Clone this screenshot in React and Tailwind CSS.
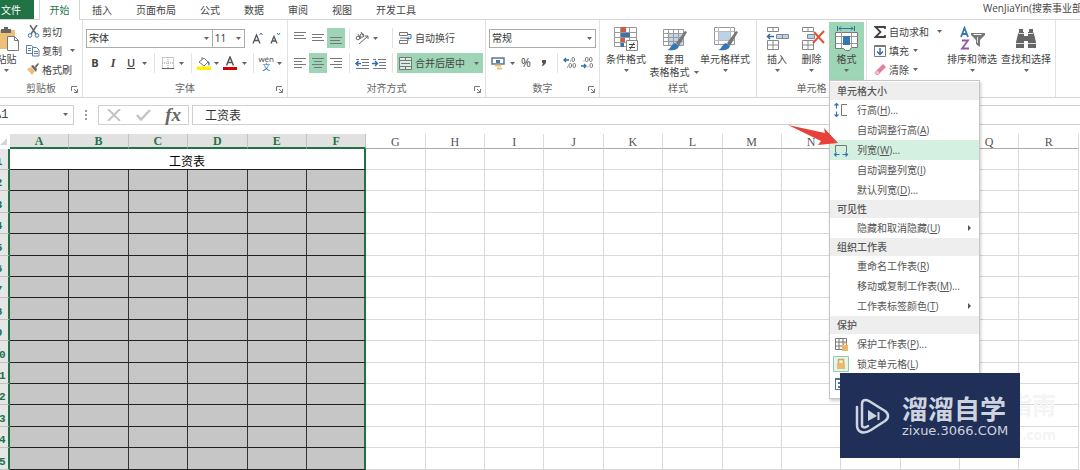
import React from 'react';

const tabs = ['插入', '页面布局', '公式', '数据', '审阅', '视图', '开发工具'];
const columns = 'ABCDEFGHIJKLMNOPQR'.split('');
const selected = columns.slice(0, 6);
const rowHeights = ['h-[21px]', 'h-[21px]', 'h-[22px]', 'h-[21px]', 'h-[22px]'];

function Caret({ className = '' }) {
  return (
    <svg viewBox="0 0 5 3" className={'h-[3px] w-[5px] shrink-0 ' + className} fill="#666" aria-hidden="true">
      <path d="M0 0h5L2.5 3z" />
    </svg>
  );
}

function Drop({ label }) {
  return (
    <button aria-label={label} className="flex h-full w-2.5 items-center justify-center">
      <Caret />
    </button>
  );
}

function Sep() {
  return <span className="mx-1 h-5 w-px shrink-0 bg-[#e3e3e3]" />;
}

function Tool({ label, active, narrow, children }) {
  return (
    <button
      aria-label={label}
      className={
        'flex h-full shrink-0 items-center justify-center text-[#444] ' +
        (narrow ? 'w-4 ' : 'w-[18px] ') +
        (active ? 'bg-[#9fd5b7]' : '')
      }
    >
      {children}
    </button>
  );
}

function Group({ label, width, launcher, children }) {
  return (
    <section className={'flex shrink-0 flex-col border-r border-[#e1e1e1] ' + width}>
      <div className="flex h-[60px]">{children}</div>
      <div className="relative h-[17px] text-center leading-[17px] text-[#666]">
        {label}
        {launcher && (
          <button aria-label={label + '设置'} className="absolute right-1 top-[6px]">
            <svg viewBox="0 0 7 7" className="h-[7px] w-[7px]" fill="none" stroke="#777">
              <path d="M.5 5V.5H6M3 3l3 3M6.5 3v3.5H3" />
            </svg>
          </button>
        )}
      </div>
    </section>
  );
}

function TwoRows({ children }) {
  return <div className="flex w-full flex-col gap-[5px] px-[3px] pt-2">{children}</div>;
}

function Row({ children }) {
  return <div className="flex h-5 items-center">{children}</div>;
}

function Big({ label, width, active, icon, second }) {
  return (
    <button
      className={
        'mt-[2px] flex h-[58px] shrink-0 flex-col items-center whitespace-nowrap pt-1 ' + width + (active ? ' bg-[#9fd5b7]' : '')
      }
    >
      {icon}
      <span className="leading-[14px]">{label}</span>
      {second ? (
        <span className="flex items-center gap-1 leading-3">
          {second}
          <Caret />
        </span>
      ) : (
        <Caret className="mt-[3px]" />
      )}
    </button>
  );
}

function Small({ label, icon, drop, wide }) {
  return (
    <button className="flex h-[19px] items-center whitespace-nowrap">
      <span className="mr-[2px] flex w-[14px] justify-center">{icon}</span>
      {label}
      {drop && <Caret className={wide ? 'ml-2' : 'ml-1'} />}
    </button>
  );
}

function Lines({ widths, y = 2, align = 'left' }) {
  return (
    <svg viewBox="0 0 12 14" className="h-[14px] w-3" stroke="#777" aria-hidden="true">
      {widths.map((w, i) => {
        const x = align === 'left' ? 0 : align === 'right' ? 12 - w : (12 - w) / 2;
        return <path key={i} d={`M${x} ${y + i * 3 + 0.5}h${w}`} />;
      })}
    </svg>
  );
}

function IndentIcon({ flip }) {
  return (
    <svg viewBox="0 0 14 11" className="h-[11px] w-[14px]" fill="none" aria-hidden="true">
      <path stroke="#777" d="M6 1.5h8M7 4.5h7M7 7.5h7M1 10.5h13M1 1.5h3" />
      <path stroke="#2f6fad" strokeWidth="1.5" d={flip ? 'M0 5.5h5M3 3l2.5 2.5L3 8' : 'M6 5.5H1M3.500 3L1 5.500 3.500 8'} />
    </svg>
  );
}

function DecimalIcon({ more }) {
  return (
    <svg viewBox="0 0 14 12" className="h-3 w-[14px]" aria-hidden="true">
      <g fill="none" stroke="#777">
        {more ? (
          <>
            <rect x="9" y=".5" width="2.500" height="4" rx="1.200" />
            <rect x="6" y="6.500" width="2.500" height="4" rx="1.200" />
            <rect x="10" y="6.500" width="2.500" height="4" rx="1.200" />
            <path d="M7 4h1M4 10h1" />
          </>
        ) : (
          <>
            <rect x="5.500" y=".5" width="2.500" height="4" rx="1.200" />
            <rect x="9.500" y=".5" width="2.500" height="4" rx="1.200" />
            <rect x="10" y="6.500" width="2.500" height="4" rx="1.200" />
            <path d="M3.500 4h1M7.500 10h1" />
          </>
        )}
      </g>
      <path fill="none" stroke="#2f6fad" strokeWidth="1.300" d={more ? 'M6 3H1M3 1L1 3l2 2' : 'M1 9h5M4 7l2 2-2 2'} />
    </svg>
  );
}

function PasteIcon() {
  return (
    <svg viewBox="0 0 24 26" className="h-[26px] w-6" aria-hidden="true">
      <path fill="#eec078" d="M0 4h20v19H0z" />
      <path fill="#666" d="M6 3h3V1h4v2h3v4H6z" />
      <path fill="#fff" stroke="#777" d="M12.500 10.500h7l4 4v10h-11zM19.500 10.500v4h4" />
    </svg>
  );
}

function Brush() {
  return (
    <>
      <path d="M27 6l-2-1-9 12 3 3z" fill="#777" />
      <path d="M15 17l4 3c-1 4-6 5-12 4 4-1 4-6 8-7z" fill="#3576b5" />
    </>
  );
}

function ConditionalIcon() {
  return (
    <svg viewBox="0 0 28 26" className="h-[26px] w-7" aria-hidden="true">
      <path fill="#fff" stroke="#999" d="M2.500 1.500h22v19h-22zM2 6.500h22M2 11.500h22M2 16.500h22M8.500 1v20M17.500 1v20" />
      <path fill="#d0583f" d="M9 1h5v5H9zM9 12h4v4H9z" />
      <path fill="#3d72ab" d="M9 7h9v4H9zM9 17h3v4H9z" />
      <path fill="#fff" stroke="#888" d="M14.500 14.500h11v10h-11z" />
      <path stroke="#444" d="M17 18.500h6M17 21.500h6M22 16.500l-4 7" />
    </svg>
  );
}

function TableFormatIcon() {
  return (
    <svg viewBox="0 0 28 26" className="h-[26px] w-7" aria-hidden="true">
      <path fill="#fff" stroke="#999" d="M3.500 3.500h20v16h-20z" />
      <path fill="#c3d6e8" d="M9 8h14v11H9z" />
      <path fill="none" stroke="#999" d="M3 7.500h20M3 11.500h20M3 15.500h20M8.500 3v16M13.500 3v16M18.500 3v16" />
      <Brush />
    </svg>
  );
}

function CellStyleIcon() {
  return (
    <svg viewBox="0 0 28 26" className="h-[26px] w-7" aria-hidden="true">
      <path fill="#fff" stroke="#999" d="M3.500 1.500h20v17h-20z" />
      <path fill="none" stroke="#bbb" d="M3 5.500h20M3 14.500h20M7.500 1v17M19.500 1v17" />
      <path fill="#bcd2e6" d="M8 6h11v8H8z" />
      <Brush />
    </svg>
  );
}

function InsertIcon({ remove }) {
  return (
    <svg viewBox="0 0 26 26" className="h-[26px] w-[26px]" aria-hidden="true">
      <path fill="#fff" stroke="#888" d="M3.500 1.500h11v4h-11zM9 1.500v4M3.500 14.500h11v9h-11zM3.500 19h11M9 14.500v9" />
      <path fill="#b9d2e9" stroke="#888" d={remove ? 'M8.500 8.500h7v4h-7z' : 'M12.500 8.500h12v4h-12zM18.500 8.500v4'} />
      {remove ? (
        <path stroke="#dd5535" strokeWidth="2" d="M15 6l10 11M25 5L14 17" />
      ) : (
        <path fill="none" stroke="#2f6fad" strokeWidth="1.500" d="M10 10.500H4M6 8l-2.500 2.500L6 13" />
      )}
    </svg>
  );
}

function FormatIcon() {
  return (
    <svg viewBox="0 0 26 26" className="h-[26px] w-[26px]" aria-hidden="true">
      <path fill="none" stroke="#2f6fad" d="M3.500 0v5M20.500 0v5M5 2.500h14M7 .5l-2 2 2 2M17 .5l2 2-2 2" />
      <path fill="#fff" stroke="#777" d="M1.500 6.500h22v15h-6l-2 3h-4l-2-2h-8z" />
      <path fill="none" stroke="#999" d="M1.500 10.500h22M1.500 17.500h22M7.500 6v16M17.500 6v15" />
      <path fill="#3576b5" d="M9 10h7v9H9z" />
    </svg>
  );
}

function SortIcon() {
  return (
    <svg viewBox="0 0 26 26" className="h-[26px] w-[26px]" fill="none" aria-hidden="true">
      <path stroke="#3477b5" strokeWidth="1.800" d="M2 11L5.500 2 9 11M3.500 8h4" />
      <path stroke="#9055a8" strokeWidth="1.800" d="M3 14.500h6L3 22.500h7" />
      <path fill="#777" d="M12 7h14v2l-5 5v7l-4-3v-4l-5-5z" />
      <path stroke="#fff" d="M14.500 8.500h8" />
      <path stroke="#ddd" d="M18.500 11v6" />
    </svg>
  );
}

function BinocularsIcon() {
  return (
    <svg viewBox="0 0 24 26" className="h-[26px] w-6" fill="#666" aria-hidden="true">
      <path d="M5 3h4v3h1v4h4V6h1V3h4v3l1 2 2 8v6h-8v-7h-4v7H2v-6l2-8 1-2z" />
      <path stroke="#ddd" d="M2 17.500h8M14 17.500h8M5 7.500h5M14 7.500h5" />
    </svg>
  );
}

const menu = [
  { heading: '单元格大小' },
  { text: '行高', k: 'H', dots: true, icon: 'height' },
  { text: '自动调整行高', k: 'A' },
  { text: '列宽', k: 'W', dots: true, icon: 'width', active: true },
  { text: '自动调整列宽', k: 'I' },
  { text: '默认列宽', k: 'D', dots: true },
  { heading: '可见性' },
  { text: '隐藏和取消隐藏', k: 'U', sub: true },
  { heading: '组织工作表' },
  { text: '重命名工作表', k: 'R' },
  { text: '移动或复制工作表', k: 'M', dots: true },
  { text: '工作表标签颜色', k: 'T', sub: true },
  { heading: '保护' },
  { text: '保护工作表', k: 'P', dots: true, icon: 'protect' },
  { text: '锁定单元格', k: 'L', icon: 'lock' },
];

function MenuIcon({ name }) {
  return (
    <svg viewBox="0 0 16 18" className="h-[18px] w-4" fill="none" aria-hidden="true">
      {name === 'height' && (
        <>
          <path stroke="#3477b5" strokeWidth="1.200" d="M3.500 2.500v5M1.500 4.500l2-2 2 2M3.500 10.500v5M1.500 13.500l2 2 2-2" />
          <path stroke="#777" d="M14 3.500H8.500v11H14" />
        </>
      )}
      {name === 'width' && (
        <>
          <path stroke="#777" d="M2.500 11V4.500h11V11" />
          <path stroke="#3477b5" strokeWidth="1.200" d="M1.500 13.500h5M3.500 11.500l-2 2 2 2M14.500 13.500h-5M12.500 11.500l2 2-2 2" />
        </>
      )}
      {name === 'protect' && (
        <>
          <path stroke="#777" d="M2.500 3.500h11v11h-11zM2.500 7h11M2.500 11h11M6 3.500v11M10 3.500v11" />
          <path fill="#eab76b" d="M9 10h6v6H9z" />
          <path stroke="#d9a050" d="M10.500 10V8h3v2" />
        </>
      )}
      {name === 'lock' && (
        <>
          <path fill="#e6f4ec" stroke="#8fcbab" d="M.5 1.500h15v15H.5z" />
          <path fill="#edb96a" d="M4 8h8v6H4z" />
          <path stroke="#dba352" strokeWidth="1.500" d="M5.500 8V4.500h5V8" />
        </>
      )}
      {name === 'cells' && (
        <>
          <path fill="#fff" stroke="#51709a" d="M2.500 3.500h12v11h-12z" />
          <path stroke="#51709a" strokeWidth="2" d="M2 4h13M5 8h3M5 12h3" />
        </>
      )}
    </svg>
  );
}

function FormatMenu() {
  return (
    <div role="menu" aria-label="格式" className="absolute left-0 top-[60px] z-10 w-[151px] border border-[#c6c6c6] bg-white shadow-[1px_2px_3px_rgba(0,0,0,0.2)]">
      <div className="pb-1 pt-px">
        {menu.map((m) =>
          m.heading ? (
            <div key={m.heading} className="h-[18px] bg-[#eeeeee] px-[7px] font-medium leading-[18px] text-[#555]">
              {m.heading}
            </div>
          ) : (
            <button
              role="menuitem"
              key={m.text}
              className={'flex h-5 w-full items-center whitespace-nowrap pl-[3px] pr-2 text-[#555] ' + (m.active ? 'bg-[#d3f0e0]' : '')}
            >
              <span className="mr-2 flex w-4 shrink-0">{m.icon && <MenuIcon name={m.icon} />}</span>
              <span>
                {m.text}(<u>{m.k}</u>){m.dots && '...'}
              </span>
              {m.sub && (
                <svg viewBox="0 0 3 6" className="ml-auto h-[6px] w-[3px]" fill="#555" aria-hidden="true">
                  <path d="M0 0l3 3-3 3z" />
                </svg>
              )}
            </button>
          ),
        )}
        <button role="menuitem" aria-label="单元格格式" className="flex h-5 w-full items-center pl-[3px]">
          <MenuIcon name="cells" />
        </button>
      </div>
    </div>
  );
}

function Ribbon() {
  return (
    <div className="flex h-[78px] border-b border-[#d5d5d5] text-[#444]">
      <Group label="剪贴板" width="w-[83px]" launcher>
        <div className="-ml-1 w-[30px]">
          <Big label="粘贴" width="-ml-1 w-[29px]" icon={<PasteIcon />} />
        </div>
        <div className="flex flex-col pt-[2px]">
          <Small
            label="剪切"
            icon={
              <svg viewBox="0 0 13 13" className="h-[13px] w-[13px]" fill="none">
                <path stroke="#666" strokeWidth="1.500" d="M3 0l6 9M10 0L4 9" />
                <circle cx="3" cy="10.500" r="1.800" stroke="#3477b5" />
                <circle cx="10" cy="10.500" r="1.800" stroke="#3477b5" />
              </svg>
            }
          />
          <Small
            label="复制"
            drop
            wide
            icon={
              <svg viewBox="0 0 14 13" className="h-[13px] w-[14px]" fill="#fff" stroke="#5a7fa8">
                <path d="M.5 1.500h5l2 2v6h-7zM2 4.500h3M2 6.500h3" />
                <path d="M6.500 3.500h4l2.500 2.500v6H6.500zM8 7.500h4M8 9.500h4" />
              </svg>
            }
          />
          <Small
            label="格式刷"
            icon={
              <svg viewBox="0 0 14 13" className="h-[13px] w-[14px]">
                <path fill="#eebd78" d="M1 6l4-2 4 4-3 4z" />
                <path fill="#666" d="M5 3l2-1 4 4-1 3zM9 3l3-3 1 1-3 4z" />
              </svg>
            }
          />
        </div>
      </Group>

      <Group label="字体" width="w-[205px]" launcher>
        <TwoRows>
          <Row>
            <Combo label="字体名称" value="宋体" width="w-[130px]" />
            <Combo label="字号" value="11" width="-ml-px w-[34px]" />
            <button aria-label="增大字号" className="ml-1 flex w-[18px] items-center justify-center">
              <svg viewBox="0 0 12 12" className="h-3 w-3" fill="none" stroke="#555">
                <path strokeWidth="1.300" d="M1 11.500L4.500 3 8 11.500M2 8.500h5" />
                <path stroke="#3477b5" d="M7.500 3L9 1l1.500 2" />
              </svg>
            </button>
            <button aria-label="减小字号" className="flex w-[18px] items-center justify-center">
              <svg viewBox="0 0 12 12" className="h-3 w-3" fill="none" stroke="#555">
                <path strokeWidth="1.300" d="M2 11.500L5 4.500l3 7M3 9h4" />
                <path stroke="#3477b5" d="M8 1l1.500 2L11 1" />
              </svg>
            </button>
          </Row>
          <Row>
            <Tool label="加粗"><b className="text-[11px]">B</b></Tool>
            <Tool label="倾斜"><i className="font-['Liberation_Serif',serif] text-[12px] font-bold">I</i></Tool>
            <Tool label="下划线"><u className="text-[11px] font-semibold">U</u></Tool>
            <Drop label="下划线选项" />
            <Sep />
            <Tool label="边框">
              <svg viewBox="0 0 12 12" className="h-3 w-3" fill="none" stroke="#999">
                <path strokeDasharray="1 1" d="M.5.5h11v11M.5.5v11M6 0v12M0 6h12" />
                <path stroke="#666" d="M0 11.500h12" />
              </svg>
            </Tool>
            <Drop label="边框选项" />
            <Sep />
            <Tool label="填充颜色" narrow>
              <svg viewBox="0 0 14 14" className="h-[14px] w-[14px]" fill="none">
                <path stroke="#777" d="M2 6l5-4 4 4-4 4zM5 4V1" />
                <path fill="#3477b5" d="M11 5c2 1 2 3 1 5-1-1-1-3-1-5z" />
                <path fill="#fff100" d="M0 10.500h14V14H0z" />
              </svg>
            </Tool>
            <Drop label="填充颜色选项" />
            <Tool label="字体颜色">
              <svg viewBox="0 0 14 14" className="h-[14px] w-[14px]" fill="none">
                <path stroke="#555" strokeWidth="1.500" d="M3.500 9.500L7 1l3.500 8.500M4.500 6.500h5" />
                <path fill="#d40000" d="M0 11h14v3H0z" />
              </svg>
            </Tool>
            <Drop label="字体颜色选项" />
            <Sep />
            <Tool label="拼音" narrow>
              <span className="flex flex-col items-center text-[8px] leading-[8px]">
                <span>wén</span>
                <span className="text-[#2f6fad]">文</span>
              </span>
            </Tool>
            <Drop label="拼音选项" />
          </Row>
        </TwoRows>
      </Group>

      <Group label="对齐方式" width="w-[198px]" launcher>
        <TwoRows>
          <Row>
            <Tool label="顶端对齐"><Lines widths={[12, 10, 12]} y={1} /></Tool>
            <Tool label="垂直居中"><Lines widths={[12, 10, 12]} y={3} /></Tool>
            <Tool label="底端对齐" active><Lines widths={[12, 10, 12]} y={6} /></Tool>
            <Sep />
            <Tool label="方向" narrow>
              <svg viewBox="0 0 14 14" className="h-[14px] w-[14px]" fill="none" stroke="#666">
                <circle cx="3" cy="7" r="1.800" />
                <circle cx="7" cy="4.500" r="1.800" />
                <path d="M3 3l3 5M6 1l3 5M4 13l9-8M13 8V5h-3" />
              </svg>
            </Tool>
            <button aria-label="方向选项" className="flex h-full w-[18px] items-center pl-[3px]"><Caret /></button>
            <Sep />
            <button className="flex h-full items-center gap-[3px] whitespace-nowrap pl-[2px]">
              <svg viewBox="0 0 13 14" className="h-[14px] w-[13px]" fill="none" stroke="#777">
                <path d="M.5 1.500h8v3h-8zM.5 9.500h8v3h-8zM1 7h7" />
                <path stroke="#2f6fad" d="M9 3.500h3v4H8M10 5.500l-2 2 2 2" />
              </svg>
              自动换行
            </button>
          </Row>
          <Row>
            <Tool label="左对齐"><Lines widths={[12, 8, 12, 8]} /></Tool>
            <Tool label="居中" active><Lines widths={[12, 8, 12, 8]} align="center" /></Tool>
            <Tool label="右对齐"><Lines widths={[12, 8, 12, 8]} align="right" /></Tool>
            <Sep />
            <Tool label="减少缩进量" narrow><IndentIcon /></Tool>
            <Tool label="增加缩进量"><IndentIcon flip /></Tool>
            <Sep />
            <button className="flex h-full items-center gap-[3px] whitespace-nowrap bg-[#9fd5b7] pl-[2px] pr-1">
              <svg viewBox="0 0 13 13" className="h-[13px] w-[13px]" fill="#d9eee2" stroke="#777">
                <path d="M.5.5h12v12H.5zM.5 3.500h12M.5 9.500h12M6.500.5v3M6.500 9.500v3" />
                <path stroke="#777" d="M2 6.500h9" />
              </svg>
              合并后居中
              <Caret className="ml-[6px]" />
            </button>
          </Row>
        </TwoRows>
      </Group>

      <Group label="数字" width="w-[114px]" launcher>
        <TwoRows>
          <Row>
            <Combo label="数字格式" value="常规" width="w-[107px]" />
          </Row>
          <Row>
            <Tool label="会计格式">
              <svg viewBox="0 0 14 13" className="h-[13px] w-[14px]" fill="none">
                <path stroke="#55779f" strokeWidth="1.500" d="M1 1h12v6H1z" />
                <path fill="#55779f" d="M5 3h4v3H5z" />
                <path stroke="#e8c070" strokeWidth="2" d="M4 8.500h6M6 11.500h5" />
              </svg>
            </Tool>
            <Drop label="会计格式选项" />
            <Tool label="百分比"><span className="text-[12px]">%</span></Tool>
            <Tool label="千位分隔">
              <svg viewBox="0 0 4 6" className="h-[6px] w-1" fill="#555"><path d="M0 0h4v3L1 6H0l1-3H0z" /></svg>
            </Tool>
            <Sep />
            <Tool label="增加小数位" narrow><DecimalIcon more /></Tool>
            <Tool label="减少小数位"><DecimalIcon /></Tool>
          </Row>
        </TwoRows>
      </Group>

      <Group label="样式" width="w-[157px]">
        <div className="flex pl-[3px]">
          <Big label="条件格式" width="w-[46px]" icon={<ConditionalIcon />} />
          <Big label="套用" second="表格格式" width="w-[50px]" icon={<TableFormatIcon />} />
          <Big label="单元格样式" width="w-[52px]" icon={<CellStyleIcon />} />
        </div>
      </Group>

      <Group label="单元格" width="w-[110px]">
        <div className="flex pl-[3px]">
          <Big label="插入" width="w-[34px]" icon={<InsertIcon />} />
          <Big label="删除" width="w-[35px]" icon={<InsertIcon remove />} />
          <div className="relative">
            <Big label="格式" width="w-[35px]" active icon={<FormatIcon />} />
            <FormatMenu />
            <svg viewBox="0 0 52 24" className="absolute -left-[41px] top-[104px] z-20 h-6 w-[52px]" fill="#e8413a" aria-hidden="true">
              <path d="M0 1l37 8-1-5 14 15-20 2 3-4z" />
            </svg>
          </div>
        </div>
      </Group>

      <Group width="w-[189px]">
        <div className="flex w-[78px] flex-col pl-[6px] pt-[2px]">
          <Small
            label="自动求和"
            drop
            wide
            icon={
              <svg viewBox="0 0 12 12" className="h-3 w-3" fill="none" stroke="#444" strokeWidth="1.800">
                <path d="M11 3V1H1.500l5 5-5 5H11V9" />
              </svg>
            }
          />
          <Small
            label="填充"
            drop
            icon={
              <svg viewBox="0 0 12 12" className="h-3 w-3" fill="none">
                <path stroke="#777" d="M.5.5h11v11H.5zM0 1.500h12" />
                <path stroke="#2f6fad" strokeWidth="1.500" d="M6 3v6M3 6.500l3 3 3-3" />
              </svg>
            }
          />
          <Small
            label="清除"
            drop
            icon={
              <svg viewBox="0 0 13 12" className="h-3 w-[13px]">
                <path fill="#e77f9a" d="M3 6l6-6 3 3-6 6z" />
                <path fill="#f4c3cf" stroke="#d27b90" strokeWidth=".6" d="M3 6l3 3-1.500 1.500H2L.8 9z" />
              </svg>
            }
          />
        </div>
        <Big label="排序和筛选" width="w-[54px]" icon={<SortIcon />} />
        <Big label="查找和选择" width="w-[54px]" icon={<BinocularsIcon />} />
      </Group>
    </div>
  );
}

function Combo({ label, value, width }) {
  return (
    <span className={'relative flex h-[19px] ' + width}>
      <select aria-label={label} className="h-full w-full appearance-none border border-[#ababab] bg-white pl-[2px] leading-[17px] text-[#333]">
        <option>{value}</option>
      </select>
      <Caret className="pointer-events-none absolute right-1 top-2" />
    </span>
  );
}

function FormulaBar() {
  return (
    <div className="flex h-9 items-center pb-[2px]">
      <span className="relative -ml-2 flex h-5 w-[82px]">
        <input aria-label="名称框" defaultValue="A1" className="h-full w-full border border-[#d0d0d0] pl-px font-['Liberation_Mono',monospace] text-[12px] text-[#444]" />
        <Caret className="absolute right-[6px] top-2" />
      </span>
      <svg viewBox="0 0 2 10" className="mx-[11px] h-[10px] w-[2px]" fill="#999" aria-hidden="true">
        <path d="M0 0h2v2H0zM0 4h2v2H0zM0 8h2v2H0z" />
      </svg>
      <div className="flex h-5 w-[91px] items-center border border-[#d0d0d0]">
        <button aria-label="取消" className="flex flex-1 justify-center">
          <svg viewBox="0 0 14 12" className="h-3 w-[14px]" fill="none" stroke="#c4c4c4" strokeWidth="2"><path d="M1 0l12 12M13 0L1 12" /></svg>
        </button>
        <button aria-label="输入" className="flex flex-1 justify-center">
          <svg viewBox="0 0 15 12" className="h-3 w-[15px]" fill="none" stroke="#c4c4c4" strokeWidth="2.500"><path d="M1 6l4 4.500L14 1" /></svg>
        </button>
        <button aria-label="插入函数" className="flex-1 font-['Liberation_Serif',serif] text-[19px] font-bold italic leading-5 text-[#666]">fx</button>
      </div>
      <input aria-label="编辑栏" defaultValue="工资表" className="ml-[3px] h-5 min-w-0 flex-1 border border-r-0 border-[#d0d0d0] pl-3 text-[12px] text-[#333]" />
    </div>
  );
}

function Sheet() {
  return (
    <div className="pr-px">
      <table className="w-full table-fixed border-separate border-spacing-0 font-['Liberation_Serif','Noto_Sans_CJK_SC',serif] text-[12px]">
        <thead>
          <tr className="h-[15px]">
            <th className="w-[10px] border-r-2 border-r-white p-0">
              <svg viewBox="0 0 8 8" className="h-2 w-2" fill="#d6d6d6" aria-hidden="true"><path d="M7 0v7H0z" /></svg>
            </th>
            {columns.map((c) => (
              <th
                key={c}
                scope="col"
                className={
                  'h-[15px] p-0 pt-px leading-3 ' +
                  (selected.includes(c)
                    ? 'border-b-2 border-r border-b-[#217346] border-r-[#c2c2c2] bg-[#e1e1e1] font-bold text-[#217346]'
                    : 'border-b border-r border-b-[#ababab] border-r-[#dcdcdc] font-normal text-[#555]')
                }
              >
                {c}
              </th>
            ))}
          </tr>
        </thead>
        <tbody>
          {Array.from({ length: 15 }, (_, r) => (
            <tr key={r} className={rowHeights[r % 5]}>
              <th scope="row" className="overflow-hidden border-b border-r-2 border-b-[#c2c2c2] border-r-[#217346] bg-[#e6e6e6] p-0 align-bottom font-['Liberation_Mono',monospace] text-[11px] font-bold leading-[14px] text-[#217346]">
                <div className="-ml-[11px] w-5 text-center">{r + 1}</div>
              </th>
              {r === 0 && (
                <td colSpan={6} className="overflow-hidden border-b border-r-2 border-b-[#222] border-r-[#217346] p-0 text-center align-bottom leading-[14px] text-black">
                  工资表
                </td>
              )}
              {columns.slice(r === 0 ? 6 : 0).map((c) => (
                <td
                  key={c}
                  className={
                    'border-b p-0 ' +
                    (selected.includes(c)
                      ? 'border-b-[#222] bg-[#c6c6c6] ' + (c === 'F' ? 'border-r-2 border-r-[#217346]' : 'border-r border-r-[#333]')
                      : 'border-r border-[#d9d9d9]')
                  }
                />
              ))}
            </tr>
          ))}
        </tbody>
      </table>
    </div>
  );
}

function Badge() {
  return (
    <>
      <div aria-hidden="true" className="absolute right-6 top-[389px] text-right text-[24px] font-bold leading-8 text-[#f4f4f4]">
        指南
        <div className="text-[14px] leading-7">.com</div>
      </div>
      <aside className="absolute right-[60px] top-[373px] z-30 flex h-[85px] w-[180px] items-center gap-3 bg-[#202f57] pl-[15px] text-[#cdd3df]">
        <svg viewBox="0 0 35 36" className="h-9 w-[35px] shrink-0" fill="none" stroke="#cdd3df" aria-hidden="true">
          <path strokeWidth="2.500" strokeLinecap="round" strokeLinejoin="round" d="M7 27V6c0-4 3-5 7-3l16 10c4 3 4 7 0 10L16 32C8 37 2 34 2 27V9M7 27c0 3 3 3 6 1" />
          <path fill="#cdd3df" stroke="none" d="M13 12l9 6-9 5z" />
          <path strokeWidth="2" d="M23.500 14v8" />
        </svg>
        <div className="whitespace-nowrap">
          <div className="text-[26px] font-bold leading-[30px]">溜溜自学</div>
          <div className="font-['DejaVu_Sans',sans-serif] text-[13px] leading-[13px]">zixue.3066.COM</div>
        </div>
      </aside>
    </>
  );
}

export default function App() {
  return (
    <main className="relative min-h-screen overflow-hidden bg-white font-['Open_Sans','Noto_Sans_CJK_SC',sans-serif] text-[10px] leading-4">
      <nav className="flex h-5 border-b border-[#d5d5d5] text-[#444]">
        <button className="h-[19px] w-[34px] bg-[#217346] pr-3 text-white">文件</button>
        <button className="ml-[5px] h-5 w-[41px] border-x border-[#d5d5d5] bg-white text-[#217346]">开始</button>
        {tabs.map((t) => (
          <button key={t} className="px-3">{t}</button>
        ))}
        <span className="ml-auto w-[97px] overflow-hidden whitespace-nowrap">WenJiaYin(搜索事业部)</span>
      </nav>
      <Ribbon />
      <FormulaBar />
      <Sheet />
      <Badge />
    </main>
  );
}
